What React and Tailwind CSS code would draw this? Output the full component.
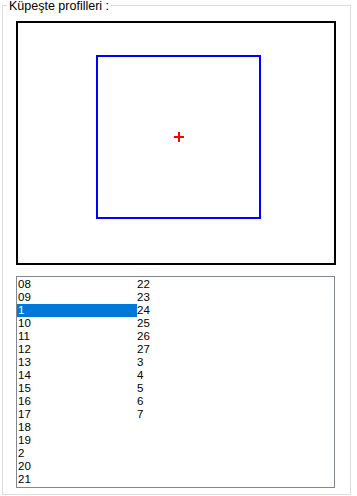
import React from "react";

const col1 = ["08", "09", "1", "10", "11", "12", "13", "14", "15", "16", "17", "18", "19", "2", "20", "21"];
const col2 = ["22", "23", "24", "25", "26", "27", "3", "4", "5", "6", "7"];

function App() {
  const selected = "1";

  return (
    <div
      className="w-[357px] h-[496px] bg-white relative"
      style={{ fontFamily: '"Liberation Sans", Arial, sans-serif' }}
    >
      {/* GROUP BOX */}
      <div className="absolute left-[2px] top-[5px] w-[349px] h-[490px] border border-[#dcdcdc]">
        <div className="pl-[13px] pt-[15px] flex flex-col gap-[11px]">
          {/* PREVIEW */}
          <div className="w-[320px] h-[244px] border-2 border-black pl-[78px] pt-[32px]">
            <div className="w-[165px] h-[164px] border-2 border-[#0000ff] flex items-center justify-center">
              <svg width="10" height="10" viewBox="0 0 10 10">
                <rect x="0" y="4" width="10" height="2" fill="#ff0000" />
                <rect x="4" y="0" width="2" height="10" fill="#ff0000" />
              </svg>
            </div>
          </div>

          {/* LIST */}
          <div className="w-[319px] h-[212px] border border-[#828790] pt-px text-[11.5px] leading-[13px] text-black flex">
            <div className="w-[120px] flex flex-col">
              {col1.map((v) => (
                <div
                  key={v}
                  className={`h-[13px] pl-px ${v === selected ? "bg-[#0078d7] text-white" : ""}`}
                >
                  {v}
                </div>
              ))}
            </div>
            <div className="flex flex-col">
              {col2.map((v) => (
                <div key={v} className="h-[13px]">
                  {v}
                </div>
              ))}
            </div>
          </div>
        </div>
      </div>

      {/* LABEL */}
      <div className="absolute left-[7px] top-0 bg-white px-[2px] text-[12.5px] leading-[12px] text-black">
        Küpeşte profilleri :
      </div>
    </div>
  );
}

export default App;
